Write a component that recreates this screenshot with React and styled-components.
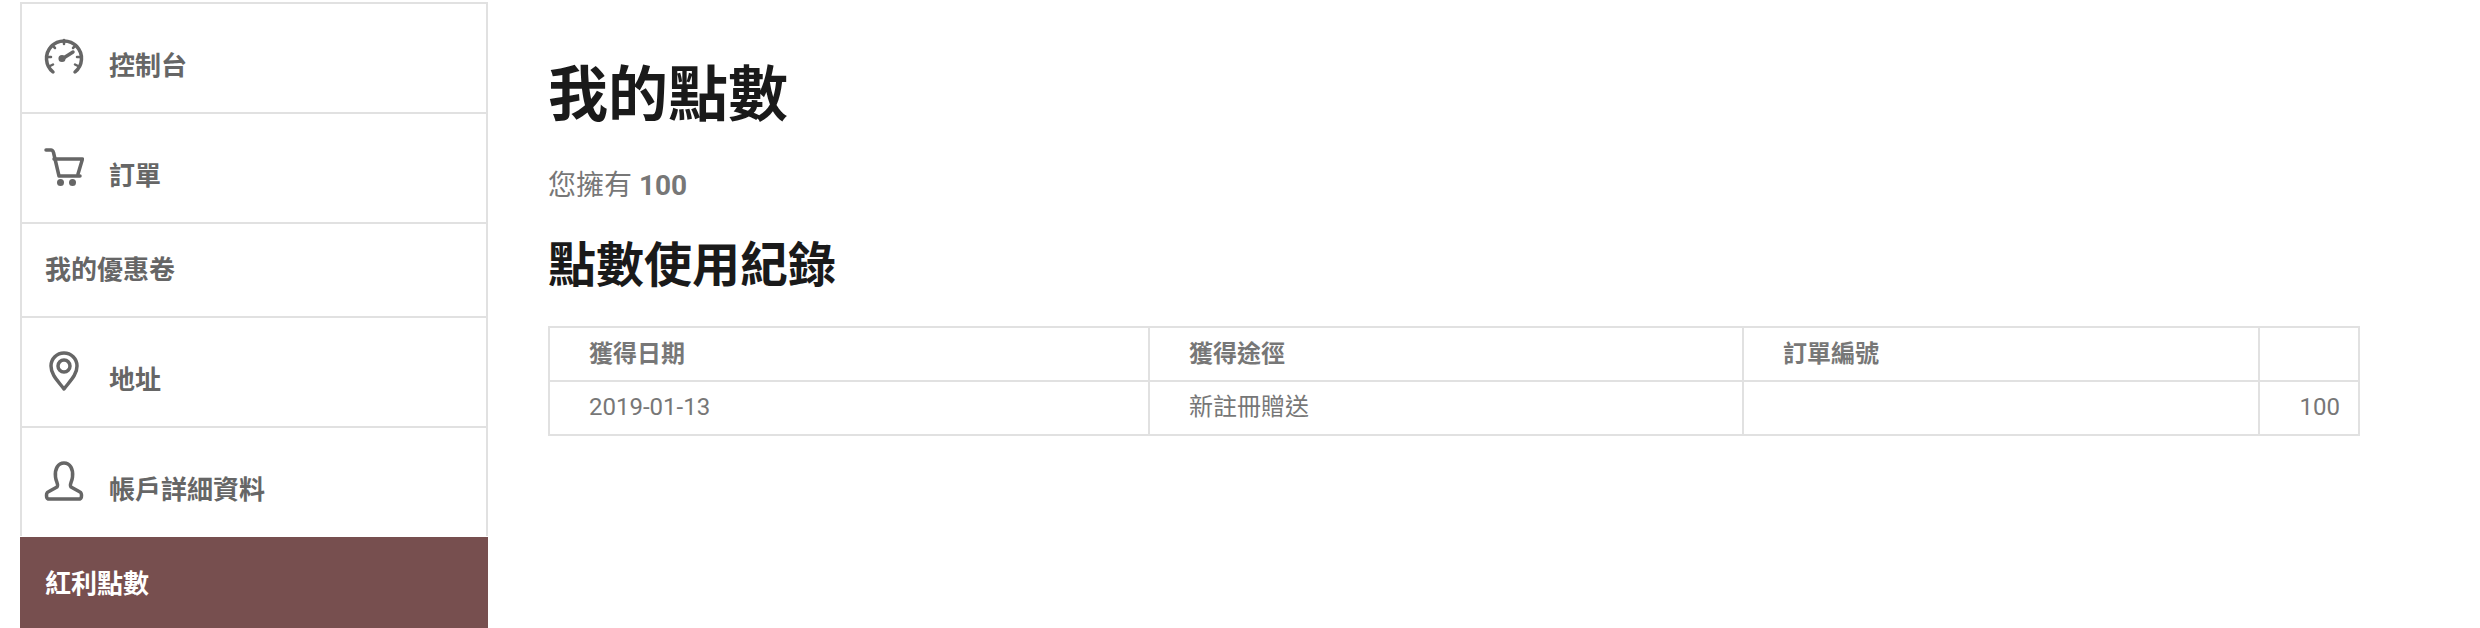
import React from 'react';
import styled, { createGlobalStyle } from 'styled-components';

const border = '#e1e1e1';

const GlobalStyle = createGlobalStyle`
  html, body {
    margin: 0;
    padding: 0;
    height: 628px;
    overflow: hidden;
    background: #fff;
    font-family: Roboto, "Noto Sans CJK TC", sans-serif;
  }
`;

const Page = styled.div`
  display: flex;
  align-items: flex-start;
  height: 628px;
  overflow: hidden;
  padding: 2px 0 0 20px;
  box-sizing: border-box;
`;

const Sidebar = styled.nav`
  flex: 0 0 468px;
  box-sizing: border-box;
`;

const NavItem = styled.a`
  display: flex;
  align-items: center;
  box-sizing: border-box;
  height: ${p => (p.$active ? 92 : p.$hasIcon ? 110 : 94)}px;
  padding-left: 23px;
  gap: 25px;
  border: 2px solid ${border};
  border-bottom: 0;
  font-size: 26px;
  font-weight: 700;
  color: ${p => (p.$active ? '#fff' : '#666')};
  background: ${p => (p.$active ? '#774f4f' : '#fff')};
  ${p => p.$active && `border-color: #774f4f; margin-top: 1px;`}
`;

const NavIcon = styled.svg`
  flex: 0 0 40px;
  width: 40px;
  height: 40px;
  margin: ${p => p.$top ?? -2}px 0 0 -1px;
  fill: none;
  stroke: #666;
  stroke-width: 3.5;
  stroke-linecap: round;
  stroke-linejoin: round;
`;

const NavLabel = styled.span`
  margin-top: ${p => (p.$hasIcon ? 10 : -6)}px;
`;

const Main = styled.main`
  flex: 0 0 1812px;
  margin-left: 60px;
`;

const Title = styled.h1`
  margin: 58px 0 0;
  font-size: 60px;
  line-height: 72px;
  font-weight: 700;
  color: #1a1a1a;
`;

const Balance = styled.p`
  margin: 34px 0 0;
  font-size: 28px;
  line-height: 40px;
  color: #777;

  strong {
    font-weight: 700;
  }
`;

const Subtitle = styled.h2`
  margin: 30px 0 0;
  font-size: 48px;
  line-height: 60px;
  font-weight: 700;
  color: #1a1a1a;
`;

const Table = styled.table`
  width: 1810px;
  margin-top: 30px;
  table-layout: fixed;
  border-collapse: collapse;
  border: 2px solid ${border};
`;

const Column = styled.col`
  width: ${p => p.$width}px;
`;

const HeadCell = styled.th`
  height: 54px;
  padding: 0 0 6px 39px;
  border: 2px solid ${border};
  box-sizing: border-box;
  text-align: left;
  font-size: 24px;
  font-weight: 700;
  color: #777;
`;

const Cell = styled.td`
  height: 54px;
  padding: ${p => (p.$right ? '0 18px 2px 0' : `0 0 ${p.$cjk ? 8 : 2}px 39px`)};
  border: 2px solid ${border};
  box-sizing: border-box;
  text-align: ${p => (p.$right ? 'right' : 'left')};
  font-size: 24px;
  color: #777;
`;

const GaugeIcon = () => (
  <NavIcon viewBox="0 0 40 40">
    <path d="M9 35 A17.5 17.5 0 1 1 31 35" />
    <path d="M20 3v4M8 8l3 3M32 8l-3 3M3 20h4M33 20h4M6 29l3-1.500M34 29l-3-1.500" strokeWidth="2.500" />
    <path d="M18 22 L29 15" />
    <circle cx="18" cy="21.500" r="1.800" fill="#666" />
  </NavIcon>
);

const CartIcon = () => (
  <NavIcon viewBox="0 0 40 40" $top={0}>
    <path d="M2 3h5c1.500 0 2 1 2.500 2.500L15 29h21" transform="translate(0 -1)" />
    <path d="M10 11h28.500L34 26" />
    <circle cx="16.500" cy="34.500" r="3.500" fill="#666" stroke="none" />
    <circle cx="28.500" cy="34.500" r="3.500" fill="#666" stroke="none" />
  </NavIcon>
);

const PinIcon = () => (
  <NavIcon viewBox="0 0 40 40">
    <path d="M20 38 C14 30 7 24 7 15 A13 13 0 0 1 33 15 C33 24 26 30 20 38 Z" />
    <circle cx="20" cy="15" r="6" />
  </NavIcon>
);

const UserIcon = () => (
  <NavIcon viewBox="0 0 40 40">
    <path d="M13 26 C15 24 12 21 11.500 16 C10.500 8 14 2 20 2 C26 2 29.500 8 28.500 16 C28 21 25 24 27 26 L36 31 C38 32 38 37 36 38 L4 38 C2 37 2 32 4 31 Z" />
  </NavIcon>
);

const navItems = [
  { label: '控制台', Icon: GaugeIcon },
  { label: '訂單', Icon: CartIcon },
  { label: '我的優惠卷' },
  { label: '地址', Icon: PinIcon },
  { label: '帳戶詳細資料', Icon: UserIcon },
  { label: '紅利點數', active: true },
];

const App = () => (
  <Page>
    <GlobalStyle />
    <Sidebar>
      {navItems.map(({ label, Icon, active }) => (
        <NavItem key={label} $hasIcon={!!Icon} $active={active}>
          {Icon && <Icon />}
          <NavLabel $hasIcon={!!Icon}>{label}</NavLabel>
        </NavItem>
      ))}
    </Sidebar>
    <Main>
      <Title>我的點數</Title>
      <Balance>
        您擁有 <strong>100</strong>
      </Balance>
      <Subtitle>點數使用紀錄</Subtitle>
      <Table>
        <colgroup>
          <Column $width={600} />
          <Column $width={594} />
          <Column $width={516} />
          <Column $width={100} />
        </colgroup>
        <thead>
          <tr>
            <HeadCell>獲得日期</HeadCell>
            <HeadCell>獲得途徑</HeadCell>
            <HeadCell>訂單編號</HeadCell>
            <HeadCell />
          </tr>
        </thead>
        <tbody>
          <tr>
            <Cell>2019-01-13</Cell>
            <Cell $cjk>新註冊贈送</Cell>
            <Cell />
            <Cell $right>100</Cell>
          </tr>
        </tbody>
      </Table>
    </Main>
  </Page>
);

export default App;
